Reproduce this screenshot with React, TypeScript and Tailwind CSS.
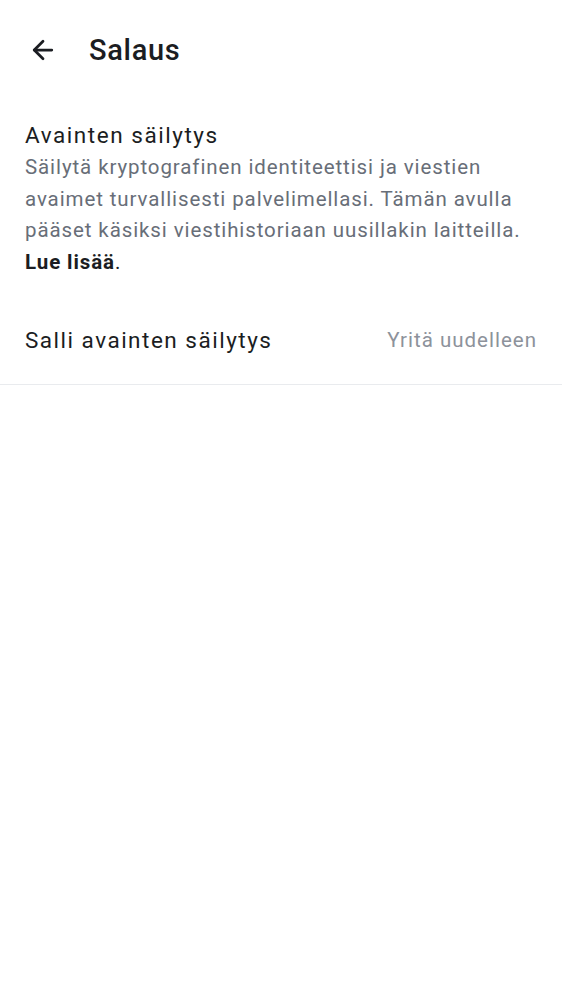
import { ArrowLeft } from "lucide-react";

const App = () => {
	return (
		<div
			className="min-h-screen bg-white text-[#1b1d22]"
			style={{ fontFamily: "Roboto, 'Noto Sans', sans-serif" }}
		>
			{/* Header */}
			<div className="flex items-center h-[100px] px-[28px] gap-[31px]">
				<ArrowLeft className="w-[30px] h-[30px]" strokeWidth={2.2} />
				<h1 className="text-[29px] font-medium leading-none tracking-[0.7px]">
					Salaus
				</h1>
			</div>

			{/* Key storage section */}
			<div className="px-[25px] pt-[20px]">
				<h2 className="text-[22.5px] leading-[30px] tracking-[1.55px]">
					Avainten säilytys
				</h2>
				<p className="text-[20.5px] leading-[31.5px] tracking-[0.9px] text-[#686e78] mt-[2px]">
					Säilytä kryptografinen identiteettisi ja viestien avaimet
					turvallisesti palvelimellasi. Tämän avulla pääset käsiksi
					viestihistoriaan uusillakin laitteilla.{" "}
					<span className="block text-[#1b1d22] font-bold tracking-[0.9px]">
						Lue lisää<span className="font-normal">.</span>
					</span>
				</p>
			</div>

			<div className="flex items-center justify-between px-[25px] h-[107px] pt-[20px] pb-[1px] border-b border-[#e9ebee]">
				<span className="text-[22.5px] tracking-[1.5px]">
					Salli avainten säilytys
				</span>
				<button className="text-[20.5px] tracking-[1px] text-[#8d929b]">
					Yritä uudelleen
				</button>
			</div>
		</div>
	);
};

export default App;
